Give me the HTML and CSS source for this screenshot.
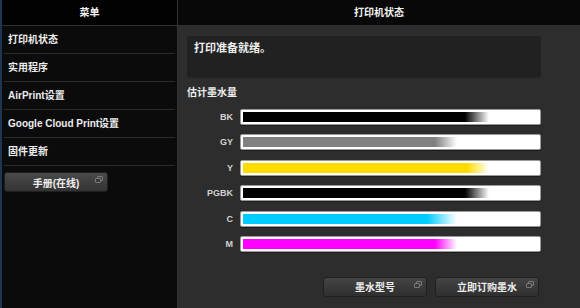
FILE: index.html
```html
<!DOCTYPE HTML>
<html>
	<head>
		<meta charset="utf-8">
		<title>打印机状态</title>
		<link rel="stylesheet" href="styles.css">
	</head>
	<body>
		<div class="page">
			<div class="sidebar">
				<div class="head">菜单</div>
				<div class="menuItem">打印机状态</div>
				<div class="menuItem">实用程序</div>
				<div class="menuItem">AirPrint设置</div>
				<div class="menuItem">Google Cloud Print设置</div>
				<div class="menuItem">固件更新</div>
				<button class="darkButton manualButton">手册(在线)<span class="winIcon"></span></button>
			</div>
			<div class="main">
				<div class="head">打印机状态</div>
				<div class="content">
					<div class="message">打印准备就绪。</div>
					<div class="inkTitle">估计墨水量</div>
					<div class="inkList">
						<div class="inkRow">
							<span class="inkLabel">BK</span>
							<div class="inkBar"><div class="inkFill black" style="width: 83.5%"></div></div>
						</div>
						<div class="inkRow">
							<span class="inkLabel">GY</span>
							<div class="inkBar"><div class="inkFill grey" style="width: 72.7%"></div></div>
						</div>
						<div class="inkRow">
							<span class="inkLabel">Y</span>
							<div class="inkBar"><div class="inkFill yellow" style="width: 83.5%"></div></div>
						</div>
						<div class="inkRow">
							<span class="inkLabel">PGBK</span>
							<div class="inkBar"><div class="inkFill black" style="width: 83.5%"></div></div>
						</div>
						<div class="inkRow">
							<span class="inkLabel">C</span>
							<div class="inkBar"><div class="inkFill cyan" style="width: 72.7%"></div></div>
						</div>
						<div class="inkRow">
							<span class="inkLabel">M</span>
							<div class="inkBar"><div class="inkFill magenta" style="width: 72.7%"></div></div>
						</div>
					</div>
					<div class="actions">
						<button class="darkButton">墨水型号<span class="winIcon"></span></button>
						<button class="darkButton">立即订购墨水<span class="winIcon"></span></button>
					</div>
				</div>
			</div>
		</div>
	</body>
</html>
```

FILE: styles.css
```css
html, body
{
	margin: 0;
	padding: 0;
	height: 100%;
}
body
{
	background-color: #2d2d2d;
	color: #eeeeee;
	font-family: "Liberation Sans", "Noto Sans CJK SC", sans-serif;
	font-weight: bold;
	font-size: 10px;
}
div.page
{
	display: flex;
	height: 308px;
	overflow: hidden;
}
div.sidebar
{
	box-sizing: border-box;
	width: 178px;
	flex: none;
	background-color: #0b0b0b;
	border-left: 2px solid #1e3652;
	border-right: 1px solid #333333;
}
div.head
{
	height: 25px;
	line-height: 25px;
	text-align: center;
	background-color: #060606;
	border-bottom: 1px solid #313131;
	color: #f2f2f2;
}
div.sidebar div.head
{
	background-color: #020202;
}
div.menuItem
{
	height: 27px;
	line-height: 27px;
	margin: 0 2px;
	padding-left: 4px;
	border-bottom: 1px solid #2c2c2c;
	color: #ededed;
	white-space: nowrap;
}
button.darkButton
{
	position: relative;
	box-sizing: border-box;
	width: 104px;
	height: 20px;
	padding: 0;
	border: 1px solid #202020;
	border-radius: 3px;
	background: linear-gradient(to bottom, #444444, #2f2f2f);
	color: #eeeeee;
	font-family: "Liberation Sans", "Noto Sans CJK SC", sans-serif;
	font-weight: bold;
	font-size: 10px;
	text-align: center;
}
button.manualButton
{
	display: block;
	margin: 6px 0 0 2px;
	background: linear-gradient(to bottom, #4a4a4a, #333333);
}
span.winIcon
{
	position: absolute;
	top: 3px;
	right: 4px;
	width: 4px;
	height: 3px;
	border: 1px solid #7a7a7a;
	border-radius: 1px;
}
span.winIcon:before
{
	content: "";
	position: absolute;
	top: 1px;
	left: -3px;
	width: 4px;
	height: 3px;
	border: 1px solid #7a7a7a;
	border-radius: 1px;
	background-color: #3a3a3a;
}
div.main
{
	flex: 1;
	background-color: #2d2d2d;
}
div.main div.head
{
	background-color: #080808;
}
div.content
{
	padding: 10px 39px 0 9px;
}
div.message
{
	height: 42px;
	box-sizing: border-box;
	padding: 5px 7px;
	background-color: #212121;
	border-radius: 3px;
	font-size: 11px;
	line-height: 14px;
}
div.inkTitle
{
	margin-top: 8px;
	line-height: 13px;
}
div.inkList
{
	display: flex;
	flex-direction: column;
	gap: 9.4px;
	margin-top: 10px;
}
div.inkRow
{
	display: flex;
	align-items: center;
}
span.inkLabel
{
	width: 46px;
	margin-right: 7px;
	text-align: right;
	font-size: 9px;
	color: #d2d2d2;
}
div.inkBar
{
	flex: 1;
	box-sizing: border-box;
	height: 16px;
	padding: 2px;
	background-color: #ffffff;
	border: 1px solid #9a9a9a;
	border-radius: 2px;
	box-shadow: 0 1px 0 #1c1c1c;
}
div.inkFill
{
	height: 100%;
}
div.black
{
	background: linear-gradient(to right, #000000 calc(100% - 24px), rgba(0, 0, 0, 0));
}
div.grey
{
	background: linear-gradient(to right, #808080 calc(100% - 22px), rgba(128, 128, 128, 0));
}
div.yellow
{
	background: linear-gradient(to right, #ffdc00 calc(100% - 22px), rgba(255, 220, 0, 0));
}
div.cyan
{
	background: linear-gradient(to right, #00ccff calc(100% - 30px), rgba(0, 204, 255, 0));
}
div.magenta
{
	background: linear-gradient(to right, #ff00ff calc(100% - 22px), rgba(255, 0, 255, 0));
}
div.actions
{
	display: flex;
	justify-content: flex-end;
	gap: 8px;
	margin: 25px 2px 0 0;
}
```
